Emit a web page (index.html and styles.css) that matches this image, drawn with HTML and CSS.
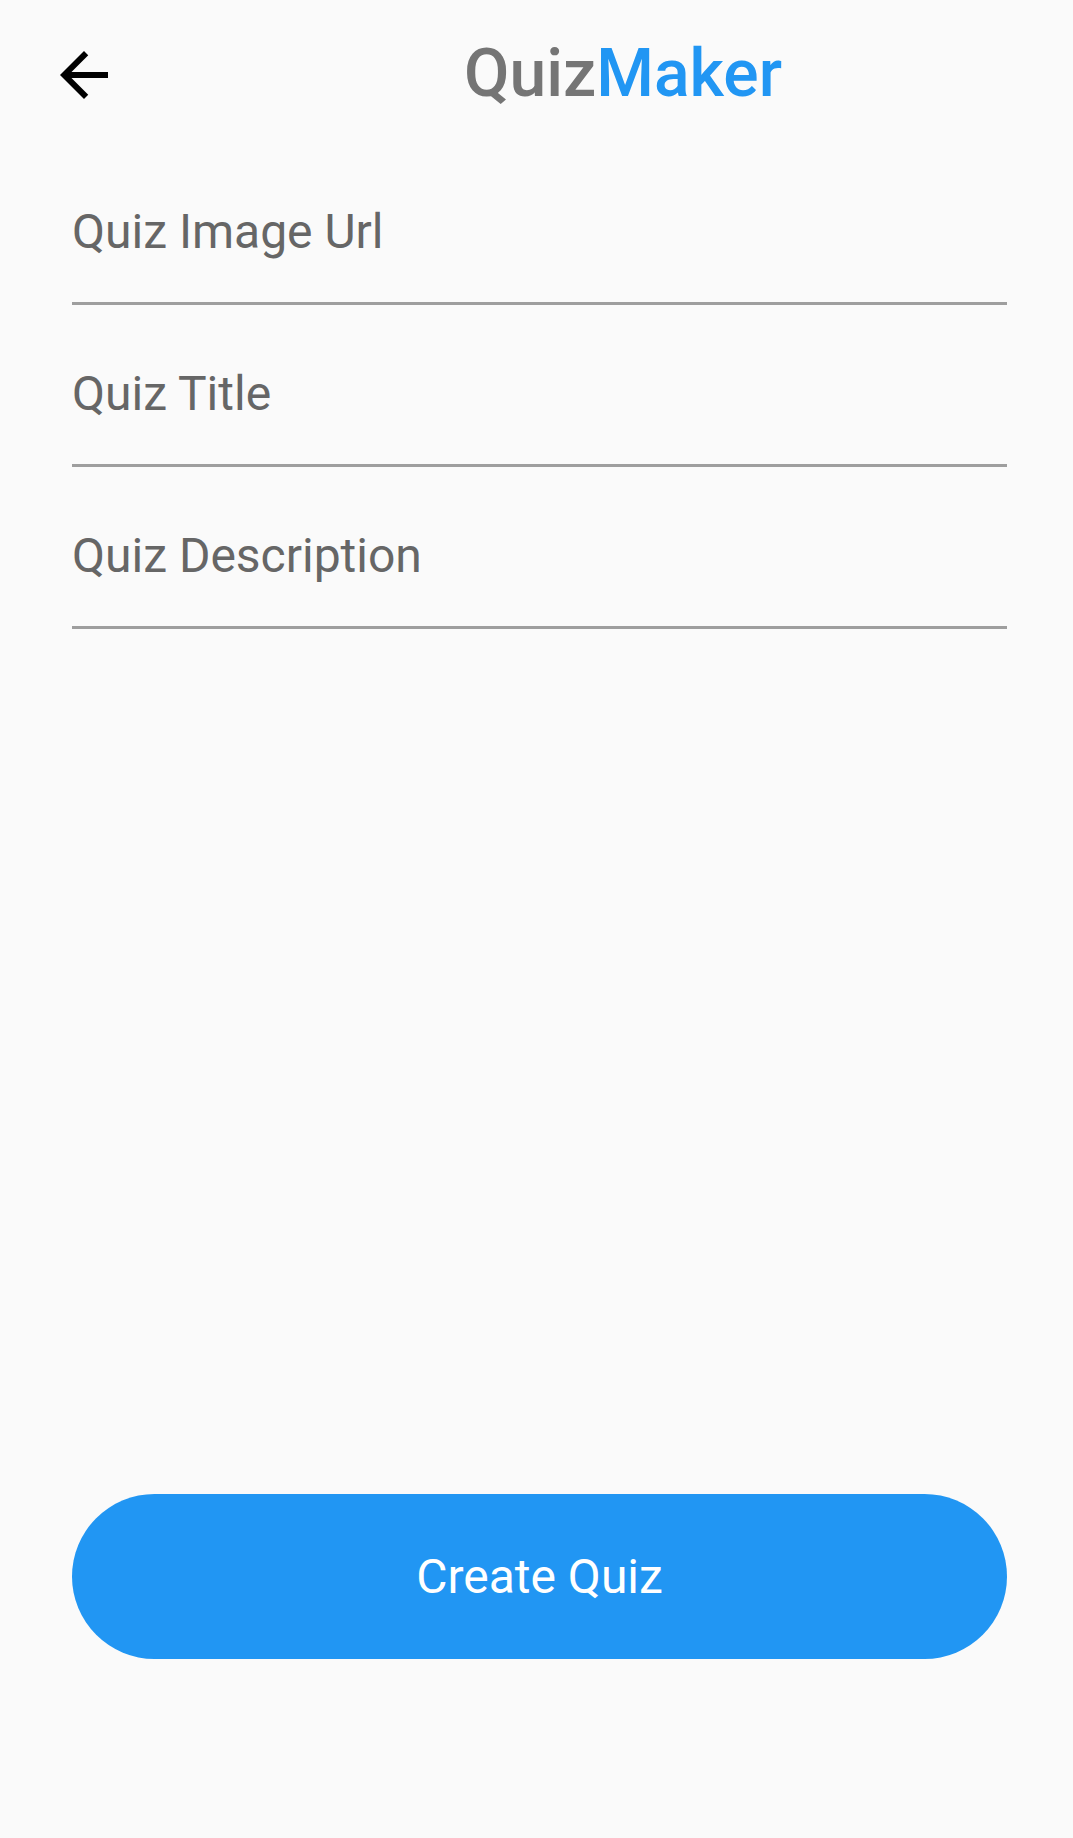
FILE: index.html
```html
<!DOCTYPE html>
<html lang="en">
<head>
<meta charset="utf-8">
<title>QuizMaker</title>
<link rel="stylesheet" href="styles.css">
</head>
<body>
<div class="page">
  <header class="appbar">
    <svg class="back" viewBox="0 0 24 24" width="72" height="72" aria-label="Back">
      <path d="M20 11H7.83l5.59-5.59L12 4l-8 8 8 8 1.41-1.41L7.83 13H20v-2z" fill="#000"/>
    </svg>
    <h1 class="brand"><span class="brand-quiz">Quiz</span><span class="brand-maker">Maker</span></h1>
  </header>
  <form class="form">
    <div class="field"><span class="hint">Quiz Image Url</span></div>
    <div class="field"><span class="hint">Quiz Title</span></div>
    <div class="field"><span class="hint">Quiz Description</span></div>
    <button type="button" class="create-btn">Create Quiz</button>
  </form>
</div>
</body>
</html>
```

FILE: styles.css
```css
html, body {
  margin: 0;
  padding: 0;
  background: #fafafa;
}
body {
  font-family: Roboto, "Liberation Sans", sans-serif;
}
.page {
  min-height: 1838px;
  display: flex;
  flex-direction: column;
}
.appbar {
  height: 143px;
  display: flex;
  align-items: flex-start;
  box-sizing: border-box;
}
.back {
  margin-left: 48px;
  margin-top: 39px;
  flex: none;
}
.brand {
  margin: 35px 0 0 344px;
  font-size: 66px;
  font-weight: 500;
  line-height: normal;
}
.brand-quiz { color: #757575; }
.brand-maker { color: #2196f3; }
.form {
  flex: 1;
  display: flex;
  flex-direction: column;
  margin: 0 66px 0 72px;
}
.field {
  padding-top: 61px;
  padding-bottom: 42px;
  border-bottom: 3px solid #9e9e9e;
}
.hint {
  display: block;
  font-size: 48px;
  line-height: 56px;
  color: #666666;
}
.create-btn {
  margin-top: auto;
  margin-bottom: 179px;
  height: 165px;
  border: none;
  border-radius: 83px;
  background: #2196f3;
  color: #fff;
  font-family: Roboto, "Liberation Sans", sans-serif;
  font-size: 48px;
  font-weight: 400;
  padding: 0;
}
```
